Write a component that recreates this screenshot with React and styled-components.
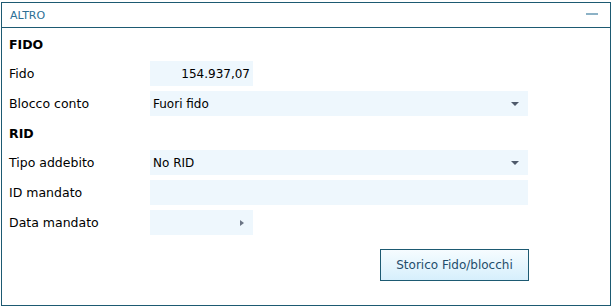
import React from "react";
import styled, { createGlobalStyle } from "styled-components";

const GlobalStyle = createGlobalStyle`
  html, body {
    margin: 0;
    padding: 0;
    background: #fff;
  }
  body {
    font-family: "DejaVu Sans", Tahoma, sans-serif;
    font-size: 12px;
    color: #000;
  }
`;

const Panel = styled.div`
  margin: 2px 0 0 1px;
  width: 610px;
  height: 304px;
  box-sizing: border-box;
  border: 1px solid #1d5a72;
  display: flex;
  flex-direction: column;
`;

const Header = styled.div`
  height: 24px;
  border-bottom: 1px solid #1d5a72;
  display: flex;
  align-items: center;
  justify-content: space-between;
  padding: 0 12px 0 8px;
  color: #2c6f95;
  font-size: 11px;
`;

const Collapse = styled.span`
  width: 12px;
  height: 2px;
  background: #8cb2c6;
  margin-top: -2px;
`;

const Body = styled.div`
  flex: 1;
  padding: 4px 7px 0 7px;
  display: flex;
  flex-direction: column;
  gap: 5px;
`;

const Section = styled.div`
  height: 24px;
  display: flex;
  align-items: center;
  font-weight: bold;
  font-size: 12.5px;
`;

const Row = styled.div`
  display: grid;
  grid-template-columns: 141px auto;
  align-items: center;
  height: 25px;
`;

const Label = styled.span`
  font-size: 12.5px;
`;

const Field = styled.div`
  height: 25px;
  width: ${(p) => (p.$short ? "103px" : "378px")};
  background: #eef7fd;
  box-sizing: border-box;
  padding: 0 3px;
  display: flex;
  align-items: center;
  justify-content: ${(p) => (p.$right ? "flex-end" : "space-between")};
  font-size: 12px;
`;

const DownArrow = styled.span`
  width: 0;
  height: 0;
  border-left: 4px solid transparent;
  border-right: 4px solid transparent;
  border-top: 4px solid #4f5a6b;
  margin-right: 6px;
`;

const RightArrow = styled.span`
  width: 0;
  height: 0;
  border-top: 3.5px solid transparent;
  border-bottom: 3.5px solid transparent;
  border-left: 4px solid #6b7585;
  margin-right: 6px;
`;

const Footer = styled.div`
  display: flex;
  justify-content: flex-end;
  padding-right: 74px;
  margin-top: 9px;
`;

const Button = styled.button`
  width: 149px;
  height: 32px;
  border: 1px solid #1d5a72;
  background: linear-gradient(#f6fcff, #d6effc);
  color: #1f4d6b;
  font-family: "DejaVu Sans", Tahoma, sans-serif;
  font-size: 12px;
  padding: 0;
  cursor: pointer;
`;

const App = () => {
  return (
    <>
      <GlobalStyle />
      <Panel>
        <Header>
          ALTRO
          <Collapse />
        </Header>
        <Body>
          <Section>FIDO</Section>
          <Row>
            <Label>Fido</Label>
            <Field $short $right>
              154.937,07
            </Field>
          </Row>
          <Row>
            <Label>Blocco conto</Label>
            <Field>
              Fuori fido
              <DownArrow />
            </Field>
          </Row>
          <Section>RID</Section>
          <Row>
            <Label>Tipo addebito</Label>
            <Field>
              No RID
              <DownArrow />
            </Field>
          </Row>
          <Row>
            <Label>ID mandato</Label>
            <Field />
          </Row>
          <Row>
            <Label>Data mandato</Label>
            <Field $short $right>
              <RightArrow />
            </Field>
          </Row>
          <Footer>
            <Button>Storico Fido/blocchi</Button>
          </Footer>
        </Body>
      </Panel>
    </>
  );
};

export default App;
